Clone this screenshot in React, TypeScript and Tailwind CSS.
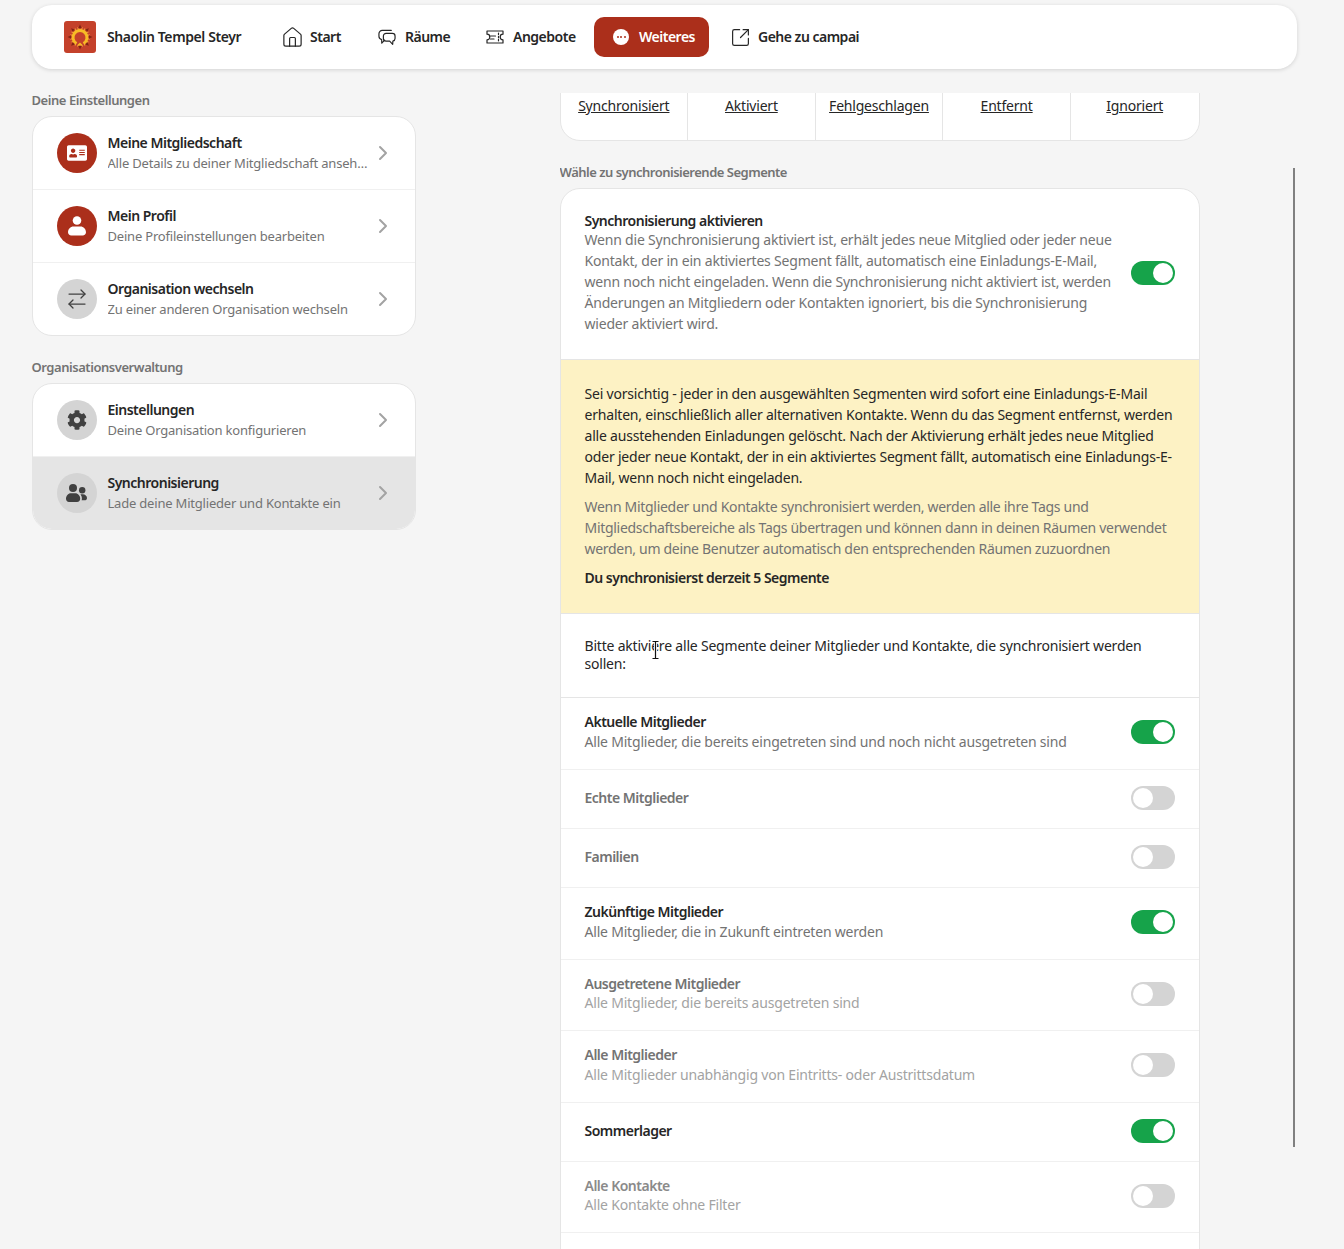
import React from "react";
import { ChevronRight, ArrowRightLeft, House, SquareArrowOutUpRight } from "lucide-react";
import { FaAddressCard, FaCog } from "react-icons/fa";

function Logo() {
  const rays = [0, 45, 90, 135, 180, 225, 270, 315];
  return (
    <svg width="32" height="32" viewBox="0 0 32 32" className="shrink-0">
      <rect width="32" height="32" rx="3" fill="#c4412b" />
      {rays.map((a) => (
        <g key={a} transform={`rotate(${a} 16 16)`}>
          <path d="M16 3.500l1.600 3.500h-3.200z" fill="#7d2413" />
          <path d="M13.500 6.500l1.200 2.200M18.500 6.500l-1.200 2.200" stroke="#f2a03a" strokeWidth="1" />
        </g>
      ))}
      <path d="M12.500 22.500A7 7 0 1 1 19.500 22.500" fill="none" stroke="#f7bb25" strokeWidth="3" />
      <circle cx="16" cy="15.500" r="3" fill="#c4412b" />
      <path d="M13 24.500l3-3 3 3z" fill="#f7bb25" />
    </svg>
  );
}

function ChatIcon() {
  return (
    <svg width="19" height="17" viewBox="0 0 19 17" fill="none" stroke="#262626" strokeWidth="1.25" strokeLinejoin="round" strokeLinecap="round">
      <path d="M14 1H4.500A3.500 3.500 0 0 0 1 4.500v2.800a3.500 3.500 0 0 0 2.800 3.400L4 14.500l3-3.200" />
      <path d="M8.500 4.200h6.700A2.800 2.800 0 0 1 18 7v2.600a2.800 2.800 0 0 1-2.300 2.700l-.2 3.400-3.200-3.300H8.500a2.800 2.800 0 0 1-2.800-2.800V7a2.800 2.800 0 0 1 2.800-2.800z" />
    </svg>
  );
}

function TicketIcon() {
  return (
    <svg width="18" height="14" viewBox="0 0 18 14" fill="none" stroke="#262626" strokeWidth="1.2" strokeLinejoin="round" strokeLinecap="round">
      <path d="M1 1h16v3.200a2.800 2.800 0 0 0 0 5.600V13H1V9.800a2.800 2.800 0 0 0 0-5.600z" />
      <path d="M4.500 6h5M4.500 9h3.500M12.500 3.200v1.400M12.500 6.300v1.400M12.500 9.400v1.400" />
    </svg>
  );
}

function UserIcon() {
  return (
    <svg width="18" height="20" viewBox="0 0 18 20" fill="currentColor">
      <circle cx="9" cy="4.500" r="4.300" />
      <path d="M5.500 10.500h7c3 0 5.500 2.600 5.500 5.800 0 1.900-1.500 3.200-3.300 3.200H3.300C1.500 19.500 0 18.200 0 16.300c0-3.200 2.500-5.800 5.500-5.800z" />
    </svg>
  );
}

function UsersIcon() {
  return (
    <svg width="21" height="18" viewBox="0 0 21 18" fill="currentColor">
      <circle cx="7" cy="4" r="4" />
      <circle cx="16.200" cy="6.200" r="3.200" />
      <path d="M4.800 9.200h4.400c2.900 0 5 2.600 5 5.300 0 2-1.200 3.500-3.200 3.500H3c-1.800 0-3-1.300-3-3.200 0-3 2.200-5.600 4.800-5.600z" />
      <path d="M15 10.200h1.800c2.400 0 4.200 1.800 4.200 3.800 0 1.400-1 2.300-2.400 2.300h-3c.2-.6.300-1.200.3-1.800 0-1.600-.5-3-1.400-4.100.1-.1.300-.2.500-.2z" />
    </svg>
  );
}

function NavItem({ icon, label, w, active }: { icon: React.ReactNode; label: string; w: string; active?: boolean }) {
  return (
    <div className={`${w} h-10 flex items-center gap-[9px] pl-[18px] rounded-[10px] font-semibold tracking-[-0.5px] whitespace-nowrap ${active ? "bg-[#ab2f1b] text-white" : "text-[#262626]"}`}>
      <span className="w-[18px] flex justify-center">{icon}</span>
      <span className="pb-0.5">{label}</span>
    </div>
  );
}

function MenuRow({ icon, title, sub, tone, last, active }: { icon: React.ReactNode; title: string; sub: string; tone: "red" | "gray"; last?: boolean; active?: boolean }) {
  return (
    <div className={`${last ? "h-[72px]" : "h-[73px] border-b border-[#f0f0f0]"} flex items-center pl-6 pr-5 ${active ? "bg-[#e5e5e5]" : ""}`}>
      <div className={`w-10 h-10 rounded-full flex items-center justify-center shrink-0 ${tone === "red" ? "bg-[#ab2f1b] text-white" : "bg-[#d4d4d4] text-[#404040]"}`}>{icon}</div>
      <div className="ml-[11px] flex-1 min-w-0">
        <div className="text-[14px] leading-5 font-semibold tracking-[-0.5px] text-[#262626]">{title}</div>
        <div className="text-[13px] leading-5 text-[#737373] truncate">{sub}</div>
      </div>
      <ChevronRight size={24} strokeWidth={2} className="text-[#a3a3a3] shrink-0" />
    </div>
  );
}

function Toggle({ on }: { on?: boolean }) {
  return (
    <div className={`w-11 h-6 rounded-full p-0.5 flex shrink-0 ${on ? "bg-[#16a34a] justify-end" : "bg-[#d4d4d4] justify-start"}`}>
      <div className="w-5 h-5 rounded-full bg-white" />
    </div>
  );
}

function SegRow({ title, sub, on, h, pb, faint, tight }: { title: string; sub?: string; on?: boolean; h: string; pb: string; faint?: boolean; tight?: boolean }) {
  const titleColor = on ? "text-[#262626]" : faint ? "text-[#8a8a8a]" : "text-[#737373]";
  const subColor = on ? "text-[#737373]" : "text-[#a3a3a3]";
  return (
    <div className={`${h} ${pb} flex items-center justify-between px-6 border-b border-[#f0f0f0]`}>
      <div className={tight ? "mb-0.5" : ""}>
        <div className={`text-[14px] leading-5 font-semibold tracking-[-0.5px] ${titleColor}`}>{title}</div>
        {sub && <div className={`text-[14px] leading-5 ${tight ? "-mt-px" : ""} ${subColor}`}>{sub}</div>}
      </div>
      <Toggle on={on} />
    </div>
  );
}

export default function App() {
  return (
    <div className="relative h-[1249px] overflow-hidden bg-[#f5f5f5] font-['Noto_Sans',sans-serif] text-[14px] tracking-[-0.2px]">
      {/* top navigation */}
      <div className="ml-[31.5px] mt-[5px] w-[1265px] h-16 bg-white rounded-[20px] shadow-[0_1px_4px_rgba(0,0,0,0.14)] flex items-center pl-[32.5px]">
        <div className="w-[201px] flex items-center gap-[11px] font-semibold tracking-[-0.4px] text-[#262626] whitespace-nowrap">
          <Logo />
          <span className="pb-0.5">Shaolin Tempel Steyr</span>
        </div>
        <div className="flex items-center gap-1">
          <NavItem w="w-[91px]" icon={<House size={23} strokeWidth={1.25} className="shrink-0" />} label="Start" />
          <NavItem w="w-[104px]" icon={<ChatIcon />} label="Räume" />
          <NavItem w="w-[122px]" icon={<TicketIcon />} label="Angebote" />
          <NavItem
            w="w-[115px]"
            active
            icon={
              <span className="w-4 h-4 rounded-full bg-white flex items-center justify-center gap-[1.5px]">
                <i className="w-[2px] h-[2px] rounded-full bg-[#ab2f1b]" />
                <i className="w-[2px] h-[2px] rounded-full bg-[#ab2f1b]" />
                <i className="w-[2px] h-[2px] rounded-full bg-[#ab2f1b]" />
              </span>
            }
            label="Weiteres"
          />
          <NavItem w="w-[160px]" icon={<SquareArrowOutUpRight size={21} strokeWidth={1.35} className="shrink-0" />} label="Gehe zu campai" />
        </div>
      </div>

      {/* body */}
      <div className="flex mt-[23px] ml-[31.5px] h-[1157px]">
        {/* left column */}
        <div className="w-[384.5px] shrink-0">
          <div className="text-[13px] leading-4 font-semibold tracking-[-0.45px] text-[#737373]">Deine Einstellungen</div>
          <div className="mt-2 bg-white border border-[#e5e5e5] rounded-[20px] overflow-hidden">
            <MenuRow tone="red" icon={<FaAddressCard size={20} />} title="Meine Mitgliedschaft" sub="Alle Details zu deiner Mitgliedschaft ansehen" />
            <MenuRow tone="red" icon={<UserIcon />} title="Mein Profil" sub="Deine Profileinstellungen bearbeiten" />
            <MenuRow tone="gray" icon={<ArrowRightLeft size={24} strokeWidth={1.25} />} title="Organisation wechseln" sub="Zu einer anderen Organisation wechseln" last />
          </div>
          <div className="mt-[23px] text-[13px] leading-4 font-semibold tracking-[-0.45px] text-[#737373]">Organisationsverwaltung</div>
          <div className="mt-2 bg-white border border-[#e5e5e5] rounded-[20px] overflow-hidden">
            <MenuRow tone="gray" icon={<FaCog size={20} />} title="Einstellungen" sub="Deine Organisation konfigurieren" />
            <MenuRow tone="gray" active icon={<UsersIcon />} title="Synchronisierung" sub="Lade deine Mitglieder und Kontakte ein" last />
          </div>
        </div>

        {/* right column */}
        <div className="mt-px ml-[143.5px] w-[640px] shrink-0 overflow-hidden">
          <div className="-mt-4 h-[64px] bg-white border border-[#e5e5e5] rounded-b-[20px] grid grid-cols-5 text-[14px] text-[#262626]">
            {["Synchronisiert", "Aktiviert", "Fehlgeschlagen", "Entfernt", "Ignoriert"].map((t, i) => (
              <div key={t} className={`text-center pt-[18px] leading-5 underline ${i < 4 ? "border-r border-[#e5e5e5]" : ""}`}>{t}</div>
            ))}
          </div>
          <div className="mt-[23px] text-[13px] leading-4 font-semibold tracking-[-0.5px] text-[#737373]">Wähle zu synchronisierende Segmente</div>
          <div className="mt-2 bg-white border border-[#e5e5e5] rounded-t-[20px]">
            <div className="h-[171px] flex items-start px-6 border-b border-[#e5e5e5]">
              <div className="w-[530px] pt-[23px]">
                <div className="text-[14px] leading-[18px] font-semibold tracking-[-0.5px] text-[#262626]">Synchronisierung aktivieren</div>
                <div className="-mt-px text-[14px] leading-[21px] text-[#737373]">
                  Wenn die Synchronisierung aktiviert ist, erhält jedes neue Mitglied oder jeder neue Kontakt, der in ein aktiviertes Segment fällt, automatisch eine Einladungs-E-Mail, wenn noch nicht eingeladen. Wenn die Synchronisierung nicht aktiviert ist, werden Änderungen an Mitgliedern oder Kontakten ignoriert, bis die Synchronisierung wieder aktiviert wird.
                </div>
              </div>
              <div className="ml-auto mt-[72px]"><Toggle on /></div>
            </div>
            <div className="h-[254px] bg-[#fdf2c4] border-b border-[#e5e5e5] px-6 pt-[23px] text-[14px] leading-[21px]">
              <p className="text-[#262626]">
                Sei vorsichtig - jeder in den ausgewählten Segmenten wird sofort eine Einladungs-E-Mail erhalten, einschließlich aller alternativen Kontakte. Wenn du das Segment entfernst, werden alle ausstehenden Einladungen gelöscht. Nach der Aktivierung erhält jedes neue Mitglied oder jeder neue Kontakt, der in ein aktiviertes Segment fällt, automatisch eine Einladungs-E-Mail, wenn noch nicht eingeladen.
              </p>
              <p className="mt-2 tracking-[-0.3px] text-[#737373]">
                Wenn Mitglieder und Kontakte synchronisiert werden, werden alle ihre Tags und<br />
                Mitgliedschaftsbereiche als Tags übertragen und können dann in deinen Räumen verwendet<br />
                werden, um deine Benutzer automatisch den entsprechenden Räumen zuzuordnen
              </p>
              <p className="mt-2 font-semibold tracking-[-0.5px] text-[#262626]">Du synchronisierst derzeit 5 Segmente</p>
            </div>
            <div className="h-[84px] px-6 pt-[23px] text-[14px] leading-[18px] text-[#262626] border-b border-[#e5e5e5]">
              Bitte aktiviere alle Segmente deiner Mitglieder und Kontakte, die synchronisiert werden sollen:
            </div>
            <SegRow h="h-[72px]" pb="pb-1" on title="Aktuelle Mitglieder" sub="Alle Mitglieder, die bereits eingetreten sind und noch nicht ausgetreten sind" />
            <SegRow h="h-[59px]" pb="pb-0.5" title="Echte Mitglieder" />
            <SegRow h="h-[59px]" pb="pb-0.5" title="Familien" />
            <SegRow h="h-[72px]" pb="pb-1" on title="Zukünftige Mitglieder" sub="Alle Mitglieder, die in Zukunft eintreten werden" />
            <SegRow h="h-[71px]" pb="pb-0.5" tight title="Ausgetretene Mitglieder" sub="Alle Mitglieder, die bereits ausgetreten sind" />
            <SegRow h="h-[72px]" pb="pb-1" title="Alle Mitglieder" sub="Alle Mitglieder unabhängig von Eintritts- oder Austrittsdatum" />
            <SegRow h="h-[59px]" pb="pb-0.5" on title="Sommerlager" />
            <SegRow h="h-[71px]" pb="pb-0.5" tight faint title="Alle Kontakte" sub="Alle Kontakte ohne Filter" />
            <div className="h-[60px]" />
          </div>
        </div>
      </div>

      {/* scrollbar thumb */}
      <div className="absolute left-[1293px] top-[168px] w-[2px] h-[979px] bg-[#808080]" />

      {/* text cursor */}
      <svg className="absolute left-[651px] top-[640px]" width="9" height="20" viewBox="0 0 9 20" fill="none">
        <path d="M1 1h7M4.500 1v18M1 19h7" stroke="#fff" strokeWidth="3" />
        <path d="M1.500 1.500h6M4.500 1.500v17M1.500 18.500h6" stroke="#111" strokeWidth="1.200" />
      </svg>
    </div>
  );
}
